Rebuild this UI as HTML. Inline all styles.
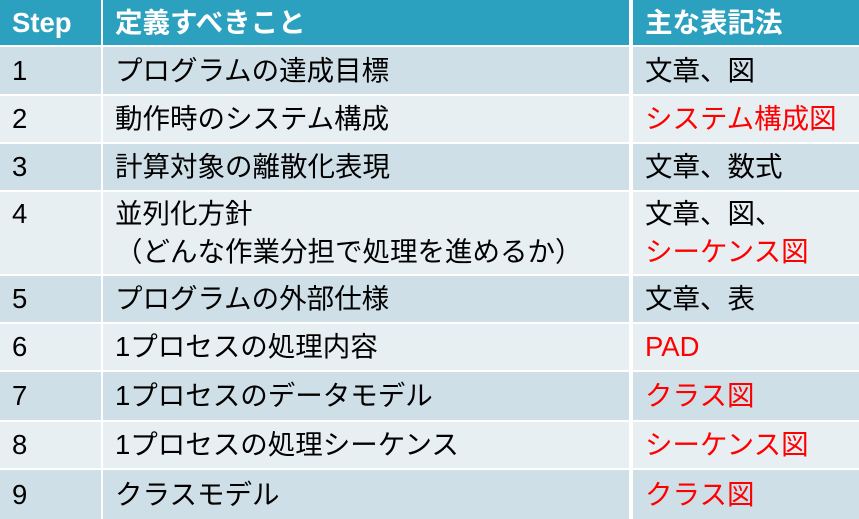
<!DOCTYPE html><html><head><style>
body{margin:0;width:859px;height:519px;background:#fff;overflow:hidden;font-family:"Liberation Sans","Noto Sans CJK JP",sans-serif;}
.r{position:absolute;left:0;width:859px;}
.c{position:absolute;top:0;bottom:0;font-size:27.5px;color:#000;line-height:32px;white-space:nowrap}
.a{left:0;width:101px;padding-left:12px;box-sizing:border-box}
.b{left:103px;width:526px;padding-left:12px;box-sizing:border-box}
.d{left:633px;width:226px;padding-left:12px;box-sizing:border-box}
.h .c{background:#2ba1bf;color:#fff;font-weight:bold;}
.o .c{background:#cfdfe7}
.e .c{background:#e8eff3}
.red{color:#ff0000}
.t{position:absolute;top:50%;transform:translateY(-50%);}
.tt{padding-top:3px;line-height:38px}
</style></head><body>
<div class="r h" style="top:0;height:45px"><div class="c a"><span class="t">Step</span></div><div class="c b"><span class="t">定義すべきこと</span></div><div class="c d"><span class="t">主な表記法</span></div></div>
<div class="r o" style="top:47px;height:47px"><div class="c a"><span class="t">1</span></div><div class="c b"><span class="t">プログラムの達成目標</span></div><div class="c d"><span class="t">文章、図</span></div></div>
<div class="r e" style="top:96px;height:46px"><div class="c a"><span class="t">2</span></div><div class="c b"><span class="t">動作時のシステム構成</span></div><div class="c d"><span class="t red">システム構成図</span></div></div>
<div class="r o" style="top:144px;height:46px"><div class="c a"><span class="t">3</span></div><div class="c b"><span class="t">計算対象の離散化表現</span></div><div class="c d"><span class="t">文章、数式</span></div></div>
<div class="r e" style="top:192px;height:82px"><div class="c a tt">4</div><div class="c b tt">並列化方針<br>（どんな作業分担で処理を進めるか）</div><div class="c d tt">文章、図、<br><span class="red">シーケンス図</span></div></div>
<div class="r o" style="top:276px;height:46px"><div class="c a"><span class="t">5</span></div><div class="c b"><span class="t">プログラムの外部仕様</span></div><div class="c d"><span class="t">文章、表</span></div></div>
<div class="r e" style="top:324px;height:46px"><div class="c a"><span class="t">6</span></div><div class="c b"><span class="t">1プロセスの処理内容</span></div><div class="c d"><span class="t red">PAD</span></div></div>
<div class="r o" style="top:372px;height:48px"><div class="c a"><span class="t">7</span></div><div class="c b"><span class="t">1プロセスのデータモデル</span></div><div class="c d"><span class="t red">クラス図</span></div></div>
<div class="r e" style="top:422px;height:46px"><div class="c a"><span class="t">8</span></div><div class="c b"><span class="t">1プロセスの処理シーケンス</span></div><div class="c d"><span class="t red">シーケンス図</span></div></div>
<div class="r o" style="top:470px;height:49px"><div class="c a"><span class="t">9</span></div><div class="c b"><span class="t">クラスモデル</span></div><div class="c d"><span class="t red">クラス図</span></div></div>
</body></html>
